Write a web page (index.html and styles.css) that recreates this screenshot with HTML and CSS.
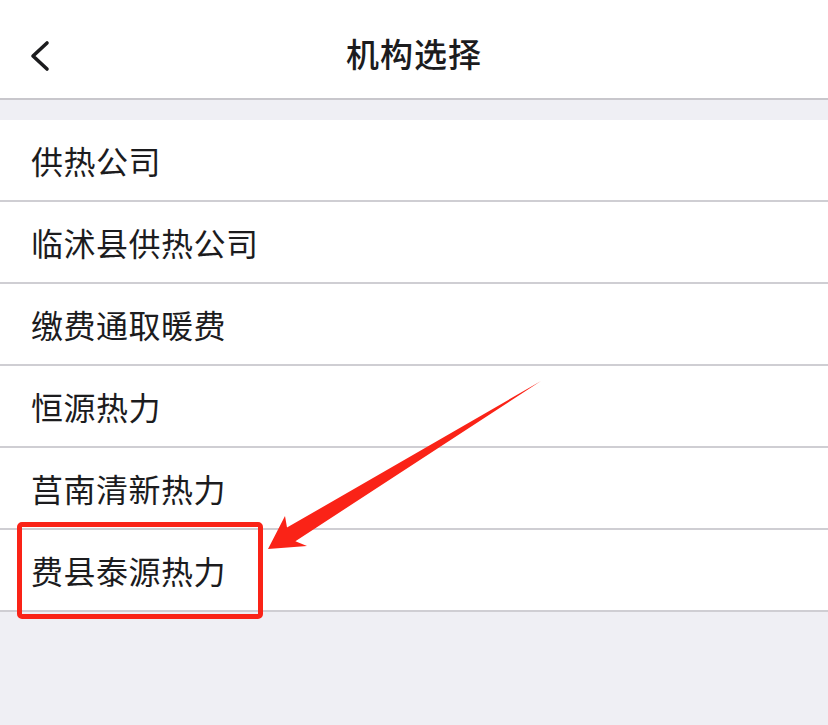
FILE: index.html
```html
<!DOCTYPE html>
<html lang="zh-CN">
<head>
    <meta charset="UTF-8">
    <meta name="viewport" content="width=device-width, initial-scale=1.0">
    <title>机构选择</title>
    <link rel="stylesheet" href="styles.css">
</head>
<body>
    <header class="nav-bar">
        <a class="back" href="#">
            <svg width="24" height="36" viewBox="0 0 24 36">
                <polyline points="18,4 4,17 18,30" fill="none" stroke="#1c1c1e" stroke-width="3.6" stroke-linecap="round" stroke-linejoin="round"/>
            </svg>
        </a>
        <h1>机构选择</h1>
    </header>

    <div class="spacer"></div>

    <ul class="org-list">
        <li>供热公司</li>
        <li>临沭县供热公司</li>
        <li>缴费通取暖费</li>
        <li>恒源热力</li>
        <li>莒南清新热力</li>
        <li>费县泰源热力</li>
    </ul>

    <!-- annotation drawn over the screenshot -->
    <div class="mark-box"></div>
    <svg class="mark-arrow" width="828" height="725" viewBox="0 0 828 725">
        <polygon points="541,381 295.4,541.2 307,546 268,549 285,516 287,527.6" fill="#fa2317"/>
    </svg>
</body>
</html>
```

FILE: styles.css
```css
body {
    margin: 0;
    padding: 0;
    background: #efeff4;
    font-family: "Noto Sans CJK SC", "Noto Sans", sans-serif;
    color: #1c1c1e;
    height: 725px;
    position: relative;
    overflow: hidden;
}

.nav-bar {
    height: 90px;
    padding-top: 8px;
    background: #fff;
    border-bottom: 2px solid #c8c7cc;
    display: flex;
    align-items: center;
    justify-content: center;
    position: relative;
}

.nav-bar h1 {
    margin: 0;
    font-size: 33px;
    font-weight: 500;
    letter-spacing: 1px;
}

.back {
    position: absolute;
    left: 29px;
    top: 39px;
    display: block;
    height: 36px;
}

.spacer {
    height: 20px;
}

.org-list {
    list-style: none;
    margin: 0;
    padding: 0;
    background: #fff;
}

.org-list li {
    height: 80px;
    border-bottom: 2px solid #cfced3;
    padding-left: 31px;
    display: flex;
    align-items: center;
    font-size: 32px;
    letter-spacing: 0.5px;
}

.mark-box {
    position: absolute;
    left: 17px;
    top: 522px;
    width: 236px;
    height: 87px;
    border: 5px solid #fa2317;
    border-radius: 5px;
}

.mark-arrow {
    position: absolute;
    left: 0;
    top: 0;
}
```
